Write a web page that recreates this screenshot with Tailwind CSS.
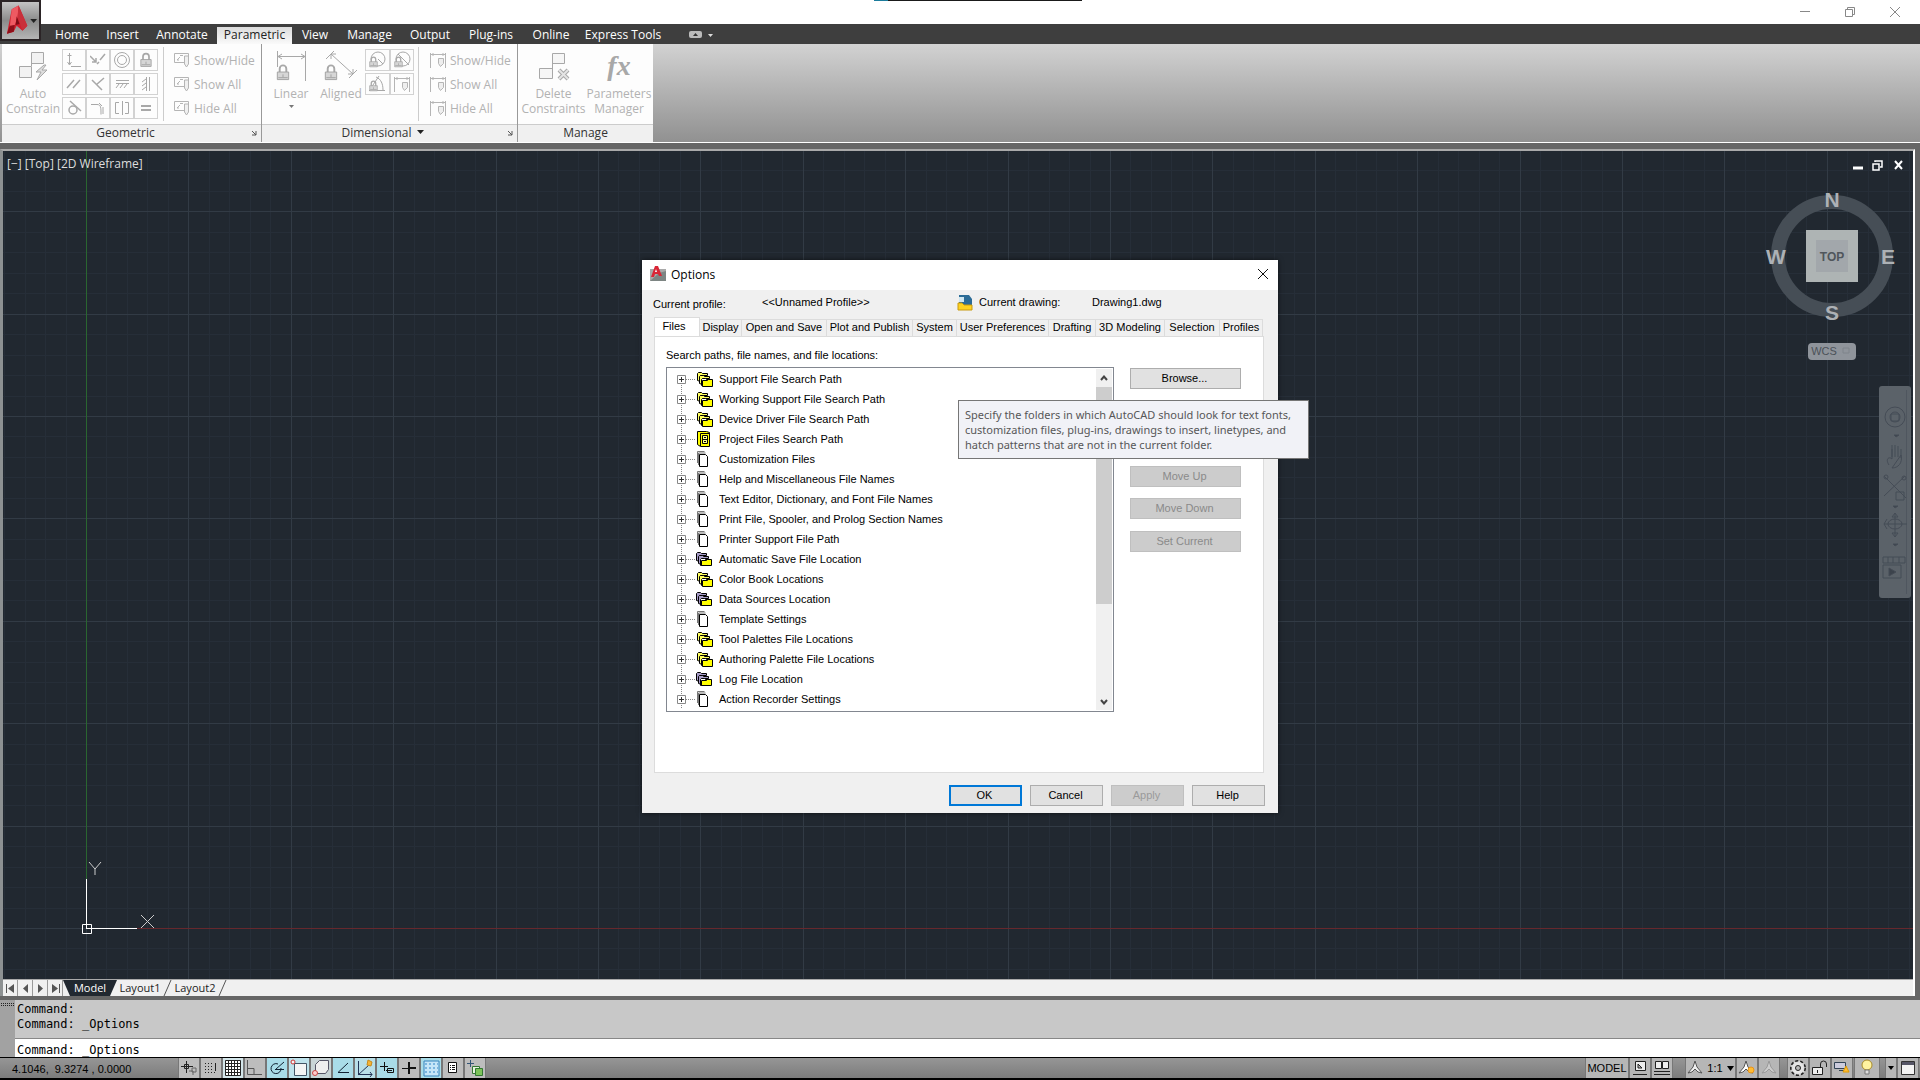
<!DOCTYPE html>
<html lang="en">
<head>
    <meta charset="UTF-8">
    <meta name="viewport" content="width=device-width, initial-scale=1.0">
    <title>AutoCAD - Options</title>
    <script src="https://cdn.jsdelivr.net/npm/@tailwindcss/browser@4"></script>
</head>
<body class="h-screen overflow-hidden bg-[#666666] font-['Open_Sans',sans-serif] text-[12px] leading-[15px] text-[#222222]">

    <!-- Shared icons -->
    <svg class="hidden">
        <symbol id="folders" viewBox="0 0 18 16">
            <path d="M1.500 9.500v-7l1-1h3l1 1h5v2h-7v6z" fill="#ffff60" stroke="#000"/>
            <path d="M3.500 12.500v-7l1-1h3l1 1h5v2h-7v6z" fill="#ffff60" stroke="#000"/>
            <path d="M5.500 14.500v-6l1-1h3l1 1h5v2h-8v4z" fill="#fff" stroke="#000"/>
            <path d="M6.500 9.500h5l1-1h4v7h-10z" fill="#ff0" stroke="#000"/>
        </symbol>
        <symbol id="folders-dark" viewBox="0 0 18 16">
            <path d="M.5 9.500v-7l1-1h3l1 1h5v2h-7v6z" fill="#a79cc8" stroke="#000"/>
            <path d="M2.500 12.500v-7l1-1h3l1 1h5v2h-7v6z" fill="#a79cc8" stroke="#000"/>
            <path d="M4.500 14.500v-6l1-1h3l1 1h5v2h-8v4z" fill="#fff" stroke="#000"/>
            <path d="M5.500 9.500h5l1-1h4v6h-10z" fill="#ff0" stroke="#000"/>
        </symbol>
        <symbol id="cabinet" viewBox="0 0 18 16">
            <path d="M1.500 13.500v-13h9l3 1v14h-9z" fill="#ff0" stroke="#000"/>
            <path d="M4.500 15V2.500h9" fill="none" stroke="#000"/>
            <path d="M6.500 4.500h5v8h-5zM6.500 8.500h5" fill="#ffff90" stroke="#000"/>
            <path d="M8 6.500h2M8 10.500h2" stroke="#000"/>
        </symbol>
        <symbol id="pages" viewBox="0 0 18 16">
            <path d="M1.500 12V.5h7M2.500 14V2h7" fill="none" stroke="#777"/>
            <path d="M3.500 15.500v-12h6l2 2v10z" fill="#fff" stroke="#000"/>
        </symbol>
        <symbol id="tag" viewBox="0 0 18 18">
            <path d="M1.500 2.500h14v9h-14zM4 9l3-3M7 4.500h3M4 9h2" fill="none" stroke="#b5b5b5"/>
            <path d="M11.500 5v8l2 3 2-3V5z" fill="#f0f0f0" stroke="#b5b5b5"/>
        </symbol>
        <symbol id="dimtag" viewBox="0 0 18 18">
            <path d="M1.500 2v15M16.500 2v15M2 3.500h14M4 2v3M14 2v3" fill="none" stroke="#b5b5b5"/>
            <path d="M9.500 7.500h5v5l-3 3-2-3z" fill="#eee" stroke="#b5b5b5"/>
        </symbol>
        <symbol id="lock" viewBox="0 0 14 18">
            <path d="M3.500 9V5a3.500 3.500 0 0 1 7 0v4" fill="none" stroke="#a8a8a8" stroke-width="2"/>
            <path d="M1 8.500h12v8H1z" fill="#d6d6d6" stroke="#a0a0a0"/>
            <path d="M7 11v3M2 14.500h10" stroke="#a0a0a0"/>
        </symbol>
        <symbol id="corner" viewBox="0 0 6 6">
            <path d="M1 1l4 4M5 1v4H1" fill="none" stroke="#555"/>
        </symbol>
    </svg>

    <div class="flex h-full flex-col">

        <!-- Title bar -->
        <header class="relative flex h-6 shrink-0 justify-end bg-white">
            <div class="absolute inset-x-0 top-0 flex h-px justify-center">
                <div class="ml-[35px] h-px w-[14px] bg-[#1c7c9c]"></div>
                <div class="h-px w-[194px] bg-[#1a1a1a]"></div>
            </div>
            <button aria-label="Minimize" class="flex w-[45px] items-center justify-center"><svg width="10" height="10"><path d="M0 4.500h10" stroke="#888"/></svg></button>
            <button aria-label="Restore" class="flex w-[45px] items-center justify-center"><svg width="10" height="10" fill="none" stroke="#888"><path d="M.5 2.500h7v7h-7zM2.500 2V.5h7v7H8"/></svg></button>
            <button aria-label="Close" class="mr-[3px] flex w-[45px] items-center justify-center"><svg width="10" height="10"><path d="M0 0l10 10M10 0L0 10" stroke="#888"/></svg></button>

            <button aria-label="Application menu" class="absolute top-0 left-0 z-10 flex h-[41px] w-[41px] items-center border-2 border-[#2b2426] bg-linear-to-b from-[#c4c4c4] via-[#8b8b8b] to-[#b5b5b5] pl-[2px]">
                <svg width="36" height="36" viewBox="0 0 36 36">
                    <path d="M3 31L8 6l7-4 9 21-5 5-6-5-3 6z" fill="#d11f2e"/>
                    <path d="M8 6l7-4-1 12-3 8-5 2z" fill="#ee5a62"/>
                    <path d="M3 31l3-8 5-1-1 7z" fill="#8f0f19"/>
                    <path d="M15 2l9 21-5 5-5-14z" fill="#c9303a"/>
                    <path d="M13 13l3 8-4 1z" fill="#7d0c15"/>
                    <path d="M27 16h7l-3.500 4z" fill="#222"/>
                </svg>
            </button>
        </header>

        <!-- Ribbon tabs -->
        <nav class="flex h-5 shrink-0 items-end bg-[#3e3e3e] pl-[46px] text-white *:pb-[2px]">
            <a href="#" class="flex h-[17px] w-[52px] items-center justify-center">Home</a>
            <a href="#" class="flex h-[17px] w-[49px] items-center justify-center">Insert</a>
            <a href="#" class="flex h-[17px] w-[70px] items-center justify-center">Annotate</a>
            <a href="#" class="flex h-[17px] w-[75px] items-center justify-center bg-linear-to-b from-[#dcdcdc] to-[#fafafa] text-[#222222]">Parametric</a>
            <a href="#" class="flex h-[17px] w-[46px] items-center justify-center">View</a>
            <a href="#" class="flex h-[17px] w-[63px] items-center justify-center">Manage</a>
            <a href="#" class="flex h-[17px] w-[58px] items-center justify-center">Output</a>
            <a href="#" class="flex h-[17px] w-[64px] items-center justify-center">Plug-ins</a>
            <a href="#" class="flex h-[17px] w-[56px] items-center justify-center">Online</a>
            <a href="#" class="flex h-[17px] w-[88px] items-center justify-center">Express Tools</a>
            <button aria-label="Minimize ribbon" class="ml-[22px] flex h-[17px] items-center">
                <svg width="24" height="8"><rect width="13" height="7" rx="2" fill="#bbb"/><path d="M4 5l2.500-3L9 5z" fill="#333"/><path d="M19 3h5l-2.500 3z" fill="#ddd"/></svg>
            </button>
        </nav>

        <!-- Ribbon panels -->
        <section class="flex h-[99px] shrink-0 border-b border-white bg-linear-to-b from-[#d2d2d2] to-[#919191] pl-[2px] text-[#b2b2b2]">
            <div class="flex w-[260px] flex-col border-r border-[#999999] bg-[#fdfdfd]">
                <div class="flex flex-1">
                    <button class="flex w-[60px] flex-col items-center pt-[7px] pl-[2px]">
                        <svg width="32" height="31" fill="none" stroke="#a8a8a8">
                            <path d="M14.500 1.500h12v11h-12zM2.500 15.500h12v11h-12z" fill="#f2f2f2"/>
                            <path d="M14.500 12v3" />
                            <path d="M27 14l-8 7h5l-4 8 10-10h-5l4-5z" fill="#ddd"/>
                        </svg>
                        <span class="mt-[4px]">Auto</span><span>Constrain</span>
                    </button>
                    <div class="grid w-[96px] grid-cols-4 content-start gap-y-[2px] pt-[5px] *:flex *:h-[22px] *:items-center *:justify-center *:border *:border-[#d2d2d2]">
                        <button aria-label="Coincident"><svg width="16" height="16" fill="none" stroke="#a8a8a8"><path d="M3.500 1v11M5 14.500h10M1.500 3.500h4M1.500 10l2 3 2-3"/></svg></button>
                        <button aria-label="Collinear"><svg width="16" height="16" fill="none" stroke="#a8a8a8"><path d="M0 4l6 6M6 6v4H2M7 12l2-2M10 8l5-6" stroke-width="1.500"/></svg></button>
                        <button aria-label="Concentric"><svg width="16" height="16" fill="none" stroke="#a8a8a8"><circle cx="8" cy="8" r="7.500"/><circle cx="8" cy="8" r="4.500"/></svg></button>
                        <button aria-label="Fix"><svg width="12" height="16"><use href="#lock"/></svg></button>
                        <button aria-label="Parallel"><svg width="16" height="16" fill="none" stroke="#a8a8a8" stroke-width="1.500"><path d="M1 12l7-8M7 12l7-8"/></svg></button>
                        <button aria-label="Perpendicular"><svg width="16" height="16" fill="none" stroke="#a8a8a8" stroke-width="1.500"><path d="M2 4l10 10M6 9l8-7"/></svg></button>
                        <button aria-label="Horizontal"><svg width="16" height="16" fill="none" stroke="#a8a8a8"><path d="M2 4.500h13M2 7.500h13M5 8l-3 4M9 8l-3 4M13 8l-3 4"/></svg></button>
                        <button aria-label="Vertical"><svg width="16" height="16" fill="none" stroke="#a8a8a8"><path d="M8.500 1v14M11.500 1v14M8 3L4 6M8 7l-4 3M8 11l-4 3"/></svg></button>
                        <button aria-label="Tangent"><svg width="16" height="16" fill="none" stroke="#a8a8a8" stroke-width="1.500"><circle cx="7" cy="10" r="4"/><path d="M4 1l11 10"/></svg></button>
                        <button aria-label="Smooth"><svg width="16" height="16" fill="none" stroke="#a8a8a8"><path d="M1 4.500h6c4 0 4 3 4 10M9 3l3 3M13 7v7"/></svg></button>
                        <button aria-label="Symmetric"><svg width="16" height="16" fill="none" stroke="#a8a8a8"><path d="M5 2.500H1.500v11H5M8.500 1v14M11 2.500h3.500v11H11"/></svg></button>
                        <button aria-label="Equal"><svg width="16" height="16" stroke="#a8a8a8" stroke-width="2"><path d="M3 6h10M3 10h10"/></svg></button>
                    </div>
                    <div class="my-[3px] ml-[5px] flex flex-1 flex-col border-l border-[#cccccc] pl-[9px]">
                        <button class="flex h-6 items-center gap-[3px] pt-[2px]"><svg width="18" height="18"><use href="#tag"/></svg>Show/Hide</button>
                        <button class="flex h-6 items-center gap-[3px] pt-[2px]"><svg width="18" height="18"><use href="#tag"/></svg>Show All</button>
                        <button class="flex h-6 items-center gap-[3px] pt-[2px]"><svg width="18" height="18"><use href="#tag"/></svg>Hide All</button>
                    </div>
                </div>
                <div class="flex h-[18px] items-center justify-end border-t border-[#cccccc] bg-[#f0f0f0] pr-[4px] pb-[2px] text-[#333333]">
                    <span class="flex-1 pr-[2px] text-center">Geometric</span><svg width="6" height="6"><use href="#corner"/></svg>
                </div>
            </div>

            <div class="flex w-[256px] flex-col border-r border-[#999999] bg-[#fdfdfd]">
                <div class="flex flex-1">
                    <button class="ml-[5px] flex w-[48px] flex-col items-center pt-[7px]">
                        <svg width="32" height="31" fill="none" stroke="#a8a8a8"><path d="M2.500 0v16M30.500 0v30M3 5.500h27M7 3L3 5.500 7 8M26 3l4 2.500L26 8"/><use href="#lock" x="1" y="13" width="14" height="17"/></svg>
                        <span class="mt-[4px]">Linear</span>
                        <svg class="mt-[4px]" width="5" height="4"><path d="M0 0h5L2.500 3z" fill="#777"/></svg>
                    </button>
                    <button class="ml-[2px] flex w-[48px] flex-col items-center pt-[7px]">
                        <svg width="36" height="31" fill="none" stroke="#a8a8a8"><path d="M3 8l8-8M26 27l8-8M8 3l22 20M8 8V3h5M25 23h5v-5"/><use href="#lock" x="1" y="13" width="14" height="17"/></svg>
                        <span class="mt-[4px]">Aligned</span>
                    </button>
                    <div class="grid w-[49px] grid-cols-2 content-start gap-y-[2px] pt-[5px] *:flex *:h-[22px] *:items-center *:justify-center *:border *:border-[#d2d2d2]">
                        <button aria-label="Radius"><svg width="18" height="18" fill="none" stroke="#a8a8a8"><circle cx="10" cy="8" r="7"/><path d="M10 8l5 5"/><use href="#lock" x="1" y="5" width="9" height="12"/></svg></button>
                        <button aria-label="Diameter"><svg width="18" height="18" fill="none" stroke="#a8a8a8"><circle cx="10" cy="8" r="7"/><path d="M5 3l11 11"/><use href="#lock" x="1" y="5" width="9" height="12"/></svg></button>
                        <button aria-label="Angular"><svg width="18" height="18" fill="none" stroke="#a8a8a8"><path d="M1 15.500h16M8 2c5 2 7 7 7 13M3 13L11 1"/><use href="#lock" x="1" y="5" width="9" height="12"/></svg></button>
                        <button aria-label="Convert"><svg width="18" height="18"><use href="#dimtag"/></svg></button>
                    </div>
                    <div class="my-[3px] ml-[4px] flex flex-1 flex-col border-l border-[#cccccc] pl-[10px]">
                        <button class="flex h-6 items-center gap-[3px] pt-[2px]"><svg width="18" height="18"><use href="#dimtag"/></svg>Show/Hide</button>
                        <button class="flex h-6 items-center gap-[3px] pt-[2px]"><svg width="18" height="18"><use href="#dimtag"/></svg>Show All</button>
                        <button class="flex h-6 items-center gap-[3px] pt-[2px]"><svg width="18" height="18"><use href="#dimtag"/></svg>Hide All</button>
                    </div>
                </div>
                <div class="flex h-[18px] items-center border-t border-[#cccccc] bg-[#f0f0f0] pr-[4px] pb-[2px] text-[#333333]">
                    <button class="flex flex-1 items-center justify-center gap-[6px] pr-[3px]">Dimensional<svg width="7" height="5"><path d="M0 0h7L3.500 4z" fill="#222"/></svg></button><svg width="6" height="6"><use href="#corner"/></svg>
                </div>
            </div>

            <div class="flex w-[135px] flex-col bg-[#fdfdfd]">
                <div class="flex flex-1">
                    <button class="flex w-[68px] flex-col items-center pt-[7px] pl-[3px]">
                        <svg width="32" height="31" fill="none" stroke="#a8a8a8"><path d="M14.500 2.500h12v10h-12zM1.500 17.500h13v10h-13zM14.500 12v6" fill="#f6f6f6"/><path d="M21 19l9 9M30 19l-9 9" stroke-width="4"/><path d="M21 19l9 9M30 19l-9 9" stroke="#e4e4e4" stroke-width="2"/></svg>
                        <span class="mt-[4px]">Delete</span><span>Constraints</span>
                    </button>
                    <button class="flex w-[66px] flex-col items-center pt-[7px]">
                        <span class="h-[31px] font-['Liberation_Serif',serif] text-[28px] leading-[30px] font-bold text-[#a8a8a8] italic">fx</span>
                        <span class="mt-[4px]">Parameters</span><span>Manager</span>
                    </button>
                </div>
                <div class="flex h-[18px] items-center justify-center border-t border-[#cccccc] bg-[#f0f0f0] pb-[2px] text-[#333333]">Manage</div>
            </div>
        </section>

        <!-- Drawing area -->
        <main class="mt-[6px] mr-[5px] flex flex-1 flex-col border-t-2 border-r-2 border-l-3 border-t-[#aaaaaa] border-r-white border-l-[#8d9192]">
            <div class="relative flex-1 overflow-hidden bg-[#212830]">
                <svg id="grid" class="absolute inset-0 h-full w-full -scale-y-100"></svg>

                <div class="relative flex justify-between pt-[5px] pl-[4px] text-[#dddddd]">
                    <span>[−] [Top] [2D Wireframe]</span>
                    <svg class="mt-[3px] mr-[9px]" width="52" height="12" fill="none" stroke="#fff" stroke-width="2">
                        <path d="M1 9h10" stroke-width="3"/><path d="M21 5h6v6h-6zM23 3V2h7v6h-2" stroke-width="1.500"/><path d="M43 2l7 8M50 2l-7 8"/>
                    </svg>
                </div>

                <!-- UCS icon -->
                <svg class="absolute bottom-[40px] left-[77px]" width="80" height="80" fill="none" stroke="#fff">
                    <path d="M6.500 69V20M6 69.500h51M2.500 65.500h9v9h-9z"/>
                    <path d="M9 3l6 7 6-7M15 10v6M61 56l13 13M74 56L61 69" stroke="#ccc"/>
                </svg>

                <!-- View cube -->
                <svg class="absolute top-[33px] right-[13px]" width="136" height="180" font-family="Liberation Sans, sans-serif" font-weight="bold" text-anchor="middle">
                    <circle cx="68" cy="72" r="54" fill="none" stroke="#464e56" stroke-width="14"/>
                    <path d="M42 46h52v52H42z" fill="#aeb4b4"/>
                    <path d="M52 56h32v32H52z" fill="#a2a7ab"/>
                    <text x="68" y="77" font-size="12" fill="#50565c">TOP</text>
                    <g font-size="21" fill="#adb1b5">
                        <text x="68" y="23">N</text><text x="68" y="136">S</text><text x="12" y="80">W</text><text x="124" y="80">E</text>
                    </g>
                    <rect x="44" y="159" width="48" height="17" rx="4" fill="#8f949b"/>
                    <text x="60" y="171" font-size="11" font-weight="normal" fill="#4b5158">WCS</text>
                    <path d="M79 164h6v5h-6z" fill="none" stroke="#7e848b"/>
                </svg>

                <!-- Navigation bar -->
                <svg class="absolute top-[235px] right-[2px]" width="32" height="212" fill="none" stroke="#454c56">
                    <rect width="32" height="212" rx="3" fill="#5b6269" stroke="none"/>
                    <path d="M27.500 4v204" stroke="#4f565f"/>
                    <circle cx="16" cy="31" r="10"/><circle cx="16" cy="31" r="5"/><path d="M12 28h8v7h-8z"/>
                    <path d="M10 79c-4-6 0-9 3-6V63m0 8V59m3 12V59m3 12V60m3 12v-9m0 6c2 8-3 13-9 13z"/>
                    <path d="M5 90l22 22M26 90L5 110M17 106h8v8h-8z"/><circle cx="7" cy="91" r="2"/><circle cx="25" cy="92" r="2"/>
                    <path d="M16 127v24M5 138h23M16 127l-3 4h6zM16 151l-3-4h6zM8 133l-3 5 3 5"/><ellipse cx="16" cy="138" rx="7" ry="5"/>
                    <path d="M4 171h22v6H4zM4 179h18v13H4zM9 171v6M14 171v6M20 171v6"/>
                    <path d="M10 182l7 4-7 4zM15 49h5l-3 2zM14 120h5l-3 2zM14 158h5l-3 2z" fill="#3c434c"/>
                </svg>
            </div>

            <!-- Layout tabs -->
            <div class="flex h-[17px] shrink-0 items-center border-t border-[#aaaaaa] bg-[#f0f0f0] text-[11px]">
                <div class="flex h-full *:flex *:w-[15px] *:items-center *:justify-center *:border-r *:border-[#999999]">
                    <button aria-label="First layout"><svg width="9" height="9" fill="#555"><path d="M0 0h1v9H0zM8 0v9L2 4.500z"/></svg></button>
                    <button aria-label="Previous layout"><svg width="9" height="9" fill="#555"><path d="M7 0v9L2 4.500z"/></svg></button>
                    <button aria-label="Next layout"><svg width="9" height="9" fill="#555"><path d="M2 0v9l5-4.500z"/></svg></button>
                    <button aria-label="Last layout"><svg width="9" height="9" fill="#555"><path d="M8 0h1v9H8zM1 0v9l6-4.500z"/></svg></button>
                </div>
                <a href="#" class="flex h-full w-[54px] items-center justify-center bg-[#212830] pb-[2px] text-white [clip-path:polygon(0_0,100%_0,47px_100%,7px_100%)]">Model</a>
                <a href="#" class="flex h-full w-[46px] items-center justify-center pb-[2px]">Layout1</a>
                <svg width="9" height="16"><path d="M8 0L1 16" stroke="#555"/></svg>
                <a href="#" class="flex h-full w-[46px] items-center justify-center pb-[2px]">Layout2</a>
                <svg width="9" height="16"><path d="M8 0L1 16" stroke="#555"/></svg>
            </div>
        </main>

        <!-- Command line -->
        <section class="mt-[4px] flex h-[57px] shrink-0 bg-[#c8c8c8] font-['DejaVu_Sans_Mono',monospace] text-black">
            <div class="w-[15px] bg-[#a2a2a2] pt-[3px]"><svg width="14" height="4"><path d="M1 .5h13M1 2.500h13" stroke="#222" stroke-dasharray="1 1"/></svg></div>
            <div class="flex-1">
                <div class="h-[38px] pt-[2px] pl-[2px]"><p>Command:</p><p>Command: _Options</p></div>
                <div class="flex h-[19px] items-center border-t border-[#888888] bg-white pt-[4px] pl-[2px]">
                    <label for="command">Command:&nbsp;</label><input id="command" type="text" value="_Options" class="flex-1 outline-none">
                </div>
            </div>
        </section>

        <!-- Status bar -->
        <footer class="flex h-[23px] shrink-0 border-t border-b-2 border-black bg-linear-to-b from-[#969696] to-[#7c7c7c] font-['Liberation_Sans',sans-serif] text-[11px] text-black">
            <span class="w-[178px] pt-[4px] pl-[12px] whitespace-pre">4.1046,  9.3274 , 0.0000</span>
            <div class="flex *:flex *:w-[22px] *:items-center *:justify-center *:border-x *:border-[#777777]">
                <button aria-label="Infer constraints" class="bg-[#bdbdbd]"><svg width="18" height="16" fill="none" stroke="#222"><path d="M1 6.500h12M6.500 1v12M4.500 4.500h4v4h-4z"/><path d="M9 11h4v4M12 8h4v4h-4z" stroke="#666"/></svg></button>
                <button aria-label="Snap" class="bg-[#bdbdbd]"><svg width="16" height="16" stroke="#222" fill="none"><path d="M2 3.500h9M2 6.500h9M2 9.500h9M2 12.500h12" stroke-dasharray="1 2"/><path d="M12.500 3v8"/></svg></button>
                <button aria-label="Grid" class="bg-[#d4e6ea]"><svg width="17" height="17" stroke="#222" fill="#fff"><path d="M.5.5h15v15H.5zM3.500 0v16M6.500 0v16M9.500 0v16M12.500 0v16M0 3.500h16M0 6.500h16M0 9.500h16M0 12.500h16"/></svg></button>
                <button aria-label="Ortho" class="bg-[#bdbdbd]"><svg width="18" height="18" stroke="#555" fill="none"><path d="M1.500 1v14.500H16M2 9.500h6v6"/></svg></button>
                <button aria-label="Polar" class="bg-[#a9dce8]"><svg width="16" height="16" stroke="#123" fill="none"><path d="M12 8a5 5 0 1 1-3-4M7 9l8-7M6 9.500h9"/></svg></button>
                <button aria-label="Object snap" class="bg-[#bfe3ec]"><svg width="18" height="18" stroke="#456" fill="#f4f4f4"><path d="M4.500 4.500h12v12h-12z"/><circle cx="3" cy="3" r="2" stroke="#c33"/></svg></button>
                <button aria-label="3D object snap" class="bg-[#c8d4d6]"><svg width="18" height="18" stroke="#556" fill="#eee"><path d="M3.500 5.500l4-4h9v9l-3 4h-10z"/><circle cx="3" cy="14" r="2.500" fill="#fcc" stroke="#c44"/></svg></button>
                <button aria-label="Object snap tracking" class="bg-[#a9dce8]"><svg width="16" height="16" stroke="#123" fill="none"><path d="M13 3L3 12.500h11"/></svg></button>
                <button aria-label="Dynamic UCS" class="bg-[#b9dfe8]"><svg width="18" height="18" stroke="#235" fill="none"><path d="M2.500 2v13.500H16M2 16L13 6M14 13l2 2.500-2 2.500"/><path d="M12 1l4 2-1 4-4-1z" fill="#f5b435" stroke="#c98a1c"/></svg></button>
                <button aria-label="Dynamic input" class="bg-[#a9dce8]"><svg width="16" height="16" stroke="#111" fill="none"><path d="M1 6.500h8M5.500 2v9M7 10.500h6M8.500 8.500h6v4h-6z"/></svg></button>
                <button aria-label="Lineweight" class="bg-[#bdbdbd]"><svg width="16" height="16" stroke="#111"><path d="M1 8.500h7"/><path d="M8 8h7M8 2v12" stroke-width="2"/></svg></button>
                <button aria-label="Transparency" class="bg-[#a9dce8]"><svg width="17" height="17"><path d="M1 1h15v15H1z" fill="#c5e6f8" stroke="#3684bd"/><path d="M2 4h13M2 8h13M2 12h13" stroke="#7ab5df" stroke-width="2" stroke-dasharray="2 2"/></svg></button>
                <button aria-label="Quick properties" class="bg-[#bdbdbd]"><svg width="10" height="14" stroke="#111" fill="#fff"><path d="M.5 1.500h8v10h-8zM2 4.500h1M4 4.500h3M2 6.500h1M4 6.500h3M2 8.500h1M4 8.500h3"/></svg></button>
                <button aria-label="Selection cycling" class="bg-[#bdbdbd]"><svg width="18" height="18" stroke="#357"><path d="M1 4.500h7M4.500 1v7"/><path d="M6.500 7.500h7v7h-7z" fill="#e6f5e0" stroke="#373"/><path d="M9.500 9.500h7v7h-7z" fill="#7cc35a" stroke="#373"/></svg></button>
            </div>

            <div class="ml-auto flex *:flex *:items-center *:justify-center *:border-x *:border-[#777777] *:bg-[#b6b6b6]">
                <button class="w-[44px]">MODEL</button>
                <button aria-label="Quick view layouts" class="w-[22px]"><svg width="16" height="16" stroke="#222" fill="#eee"><path d="M3.500 1.500h10v9h-10zM6 4v4h4zM1 14.500h14"/></svg></button>
                <button aria-label="Quick view drawings" class="w-[22px]"><svg width="18" height="16" stroke="#222" fill="#eee"><path d="M2.500 1.500h6v7h-6zM9.500 1.500h6v7h-6zM1 11.500h16M1 14.500h16"/></svg></button>
                <button class="ml-[12px] w-[51px] gap-[4px]"><svg width="16" height="16" stroke="#555" fill="#eee"><path d="M8 1l2 6 5 6-4-1-3-3-3 3-4 1 5-6z"/></svg>1:1<svg width="7" height="5"><path d="M0 0h7L3.500 5z"/></svg></button>
                <button aria-label="Annotation visibility" class="w-[22px]"><svg width="18" height="16" stroke="#555" fill="#fff"><path d="M8 1l2 6 5 6-4-1-3-3-3 3-4 1 5-6z"/><circle cx="13" cy="10" r="3" fill="#fb3" stroke="#e8941a"/></svg></button>
                <button aria-label="Auto scale" class="w-[22px]"><svg width="18" height="16" stroke="#999" fill="#ccc"><path d="M9 1l2 6 5 6-4-1-3-3-3 3-4 1 5-6z"/></svg></button>
                <button aria-label="Workspace" class="ml-[7px] w-[22px]"><svg width="18" height="18" stroke="#222" fill="#e6e6e6"><circle cx="9" cy="9" r="7" stroke-width="2" stroke-dasharray="3 2"/><circle cx="9" cy="9" r="6" stroke="#ddd"/><circle cx="9" cy="9" r="2.500" fill="#bbb"/></svg></button>
                <button aria-label="Lock" class="w-[22px]"><svg width="18" height="16" stroke="#222" fill="#eee"><path d="M1.500 7.500h10v7h-10zM6.500 10v3"/><path d="M9.500 7V4a3 3 0 0 1 6 0v3" fill="none"/></svg></button>
                <button aria-label="Hardware acceleration" class="w-[22px]"><svg width="18" height="16" stroke="#345" fill="#ccd"><path d="M1.500 2.500h11v6h-11zM6 10.500h6"/><path d="M10 12l3-6 3 6z" fill="#fb3" stroke="#d90"/></svg></button>
                <button aria-label="Isolate objects" class="ml-[1px] w-[26px]"><svg width="14" height="18"><circle cx="7" cy="6" r="5" fill="#fff3a0" stroke="#a88b2a"/><path d="M5 11h4v4H5z" fill="#ddd" stroke="#777"/></svg></button>
                <button aria-label="Status bar menu" class="ml-[5px] w-[12px]"><svg width="6" height="5"><path d="M0 0h6L3 4z"/></svg></button>
                <button aria-label="Clean screen" class="mr-[1px] w-[22px]"><svg width="14" height="14"><path d="M.5.5h13v13H.5z" fill="#f3f3f3" stroke="#333"/><path d="M1 1h12v3H1z" fill="#556"/></svg></button>
            </div>
        </footer>
    </div>

    <!-- Options dialog -->
    <div class="absolute inset-0 flex items-center justify-center pb-[7px] font-['Liberation_Sans',sans-serif] text-[11px] text-black">
        <div role="dialog" aria-labelledby="dialogTitle" class="relative flex w-[636px] flex-col bg-[#f0f0f0] shadow-[0_0_5px_rgba(0,0,0,0.6)]">
            <div class="flex h-[30px] items-center bg-white pr-[9px] pb-[2px] pl-[8px]">
                <svg width="16" height="16"><path d="M0 3h16v12H0z" fill="#a9a9a9"/><path d="M0 15l9-8 7-2v10z" fill="#7d8583"/><path d="M1 11L5 0h3l4 10H9L8 8H5l-1 3z" fill="#d92636"/><path d="M6 3l1 3H5z" fill="#fff"/></svg>
                <h2 id="dialogTitle" class="ml-[5px] flex-1 font-['Open_Sans',sans-serif] text-[12px]">Options</h2>
                <button aria-label="Close"><svg width="12" height="12"><path d="M1 1l10 10M11 1L1 11" stroke="#111"/></svg></button>
            </div>

            <div class="flex h-[27px] pl-[11px]">
                <span class="w-[109px] pt-[7px]">Current profile:</span>
                <span class="w-[195px] pt-[5px]">&lt;&lt;Unnamed Profile&gt;&gt;</span>
                <svg class="mt-[4px]" width="16" height="17"><path d="M2 1h10l3 4v9H2z" fill="#2b6b96"/><path d="M2 3h5v5H2z" fill="#cfe6f0"/><path d="M1 9h4l2 2h8v5H1z" fill="#ffd21f" stroke="#c89a10"/></svg>
                <span class="ml-[6px] w-[113px] pt-[5px]">Current drawing:</span>
                <span class="pt-[5px]">Drawing1.dwg</span>
            </div>

            <!-- Dialog tabs -->
            <div role="tablist" class="flex h-[19px] items-end px-[12px] *:h-[17px] *:border-t *:border-r *:border-[#dcdcdc] *:pb-[2px] *:whitespace-nowrap">
                <button role="tab" aria-selected="true" class="h-[19px]! w-[46px] border-l bg-white pr-[6px]">Files</button>
                <button role="tab" class="w-[42px]">Display</button>
                <button role="tab" class="w-[85px]">Open and Save</button>
                <button role="tab" class="w-[86px]">Plot and Publish</button>
                <button role="tab" class="w-[44px]">System</button>
                <button role="tab" class="w-[92px]">User Preferences</button>
                <button role="tab" class="w-[47px]">Drafting</button>
                <button role="tab" class="w-[69px]">3D Modeling</button>
                <button role="tab" class="w-[55px]">Selection</button>
                <button role="tab" class="w-[43px]">Profiles</button>
            </div>

            <!-- Files page -->
            <div class="mr-[14px] ml-[12px] h-[437px] border border-[#dcdcdc] bg-white pt-[11px] pl-[11px]">
                <p>Search paths, file names, and file locations:</p>
                <div class="mt-[4px] flex gap-[16px]">
                    <div class="flex h-[345px] w-[448px] border border-[#828790] p-px">
                        <ul id="fileTree" class="relative flex-1 overflow-hidden"></ul>
                        <div class="flex w-[16px] flex-col items-center bg-[#f0f0f0]">
                            <svg class="my-[6px]" width="8" height="6"><path d="M1 5l3-3.500L7 5" fill="none" stroke="#444" stroke-width="2"/></svg>
                            <div class="h-[217px] w-full bg-[#cdcdcd]"></div>
                            <svg class="mt-auto mb-[5px]" width="8" height="6"><path d="M1 1l3 3.500L7 1" fill="none" stroke="#444" stroke-width="2"/></svg>
                        </div>
                    </div>
                    <div class="flex w-[111px] flex-col gap-[11px] pt-px *:pr-[2px]">
                        <button class="h-[21px] border border-[#adadad] bg-[#e1e1e1]">Browse...</button>
                        <button disabled class="mt-[66px] h-[21px] border border-[#bfbfbf] bg-[#cccccc] text-[#8a8a8a]">Move Up</button>
                        <button disabled class="h-[21px] border border-[#bfbfbf] bg-[#cccccc] text-[#8a8a8a]">Move Down</button>
                        <button disabled class="mt-px h-[21px] border border-[#bfbfbf] bg-[#cccccc] text-[#8a8a8a]">Set Current</button>
                    </div>
                </div>
            </div>

            <div class="flex justify-end gap-[8px] pt-[12px] pr-[13px] pb-[7px] *:pr-[2px]">
                <button class="h-[21px] w-[73px] border-2 border-[#0078d7] bg-[#e1e1e1]">OK</button>
                <button class="h-[21px] w-[73px] border border-[#adadad] bg-[#e1e1e1]">Cancel</button>
                <button disabled class="h-[21px] w-[73px] border border-[#bfbfbf] bg-[#cccccc] text-[#9a9a9a]">Apply</button>
                <button class="h-[21px] w-[73px] border border-[#adadad] bg-[#e1e1e1]">Help</button>
            </div>

            <!-- Tooltip -->
            <div role="tooltip" class="absolute top-[140px] left-[316px] w-[351px] border border-[#767676] bg-[#f1f2f7] py-[6px] pl-[6px] font-['Noto_Sans',sans-serif] text-[11px] whitespace-nowrap text-[#575757]">
                Specify the folders in which AutoCAD should look for text fonts,<br>
                customization files, plug-ins, drawings to insert, linetypes, and<br>
                hatch patterns that are not in the current folder.
            </div>
        </div>
    </div>

    <script>
        const treeItems = [
            ["folders", "Support File Search Path"],
            ["folders", "Working Support File Search Path"],
            ["folders", "Device Driver File Search Path"],
            ["cabinet", "Project Files Search Path"],
            ["pages", "Customization Files"],
            ["pages", "Help and Miscellaneous File Names"],
            ["pages", "Text Editor, Dictionary, and Font File Names"],
            ["pages", "Print File, Spooler, and Prolog Section Names"],
            ["pages", "Printer Support File Path"],
            ["folders-dark", "Automatic Save File Location"],
            ["folders", "Color Book Locations"],
            ["folders-dark", "Data Sources Location"],
            ["pages", "Template Settings"],
            ["folders", "Tool Palettes File Locations"],
            ["folders", "Authoring Palette File Locations"],
            ["folders-dark", "Log File Location"],
            ["pages", "Action Recorder Settings"]
        ];

        document.getElementById('fileTree').innerHTML = treeItems.map(([icon, label], i) => `
            <li class="flex h-5 items-center pl-[8px]">
                <svg width="20" height="20" fill="none" stroke="#888">
                    <path d="M5.500 ${i === 0 ? 14 : 0}V20M10 10.500h10" stroke-dasharray="1 1"/>
                    <path d="M1.500 6.500h8v8h-8z" fill="#fff"/>
                    <path d="M3 10.500h5M5.500 8v5" stroke="#333"/>
                </svg>
                <svg class="mr-[5px]" width="18" height="16"><use href="#${icon}"/></svg>
                <span>${label}</span>
            </li>`).join('');

        // Grid lines start from the UCS origin; the svg is flipped, so y grows upwards
        const originX = 83, originY = 50, step = 20.48;
        let minor = '', major = '';
        for (let i = -4; i < 200; i++) {
            const x = Math.round(originX + i * step) + 0.5;
            const y = Math.round(originY + i * step) + 0.5;
            const lines = `M${x} 0V4096M0 ${y}H4096`;
            if (i % 5 === 0) major += lines; else minor += lines;
        }
        document.getElementById('grid').innerHTML = `
            <path d="${minor}" stroke="#262e38"/>
            <path d="${major}" stroke="#323b45"/>
            <path d="M${originX + 0.5} ${originY}V4096" stroke="#2a6630"/>
            <path d="M${originX} ${originY + 0.5}H4096" stroke="#66282d"/>`;
    </script>
</body>
</html>
